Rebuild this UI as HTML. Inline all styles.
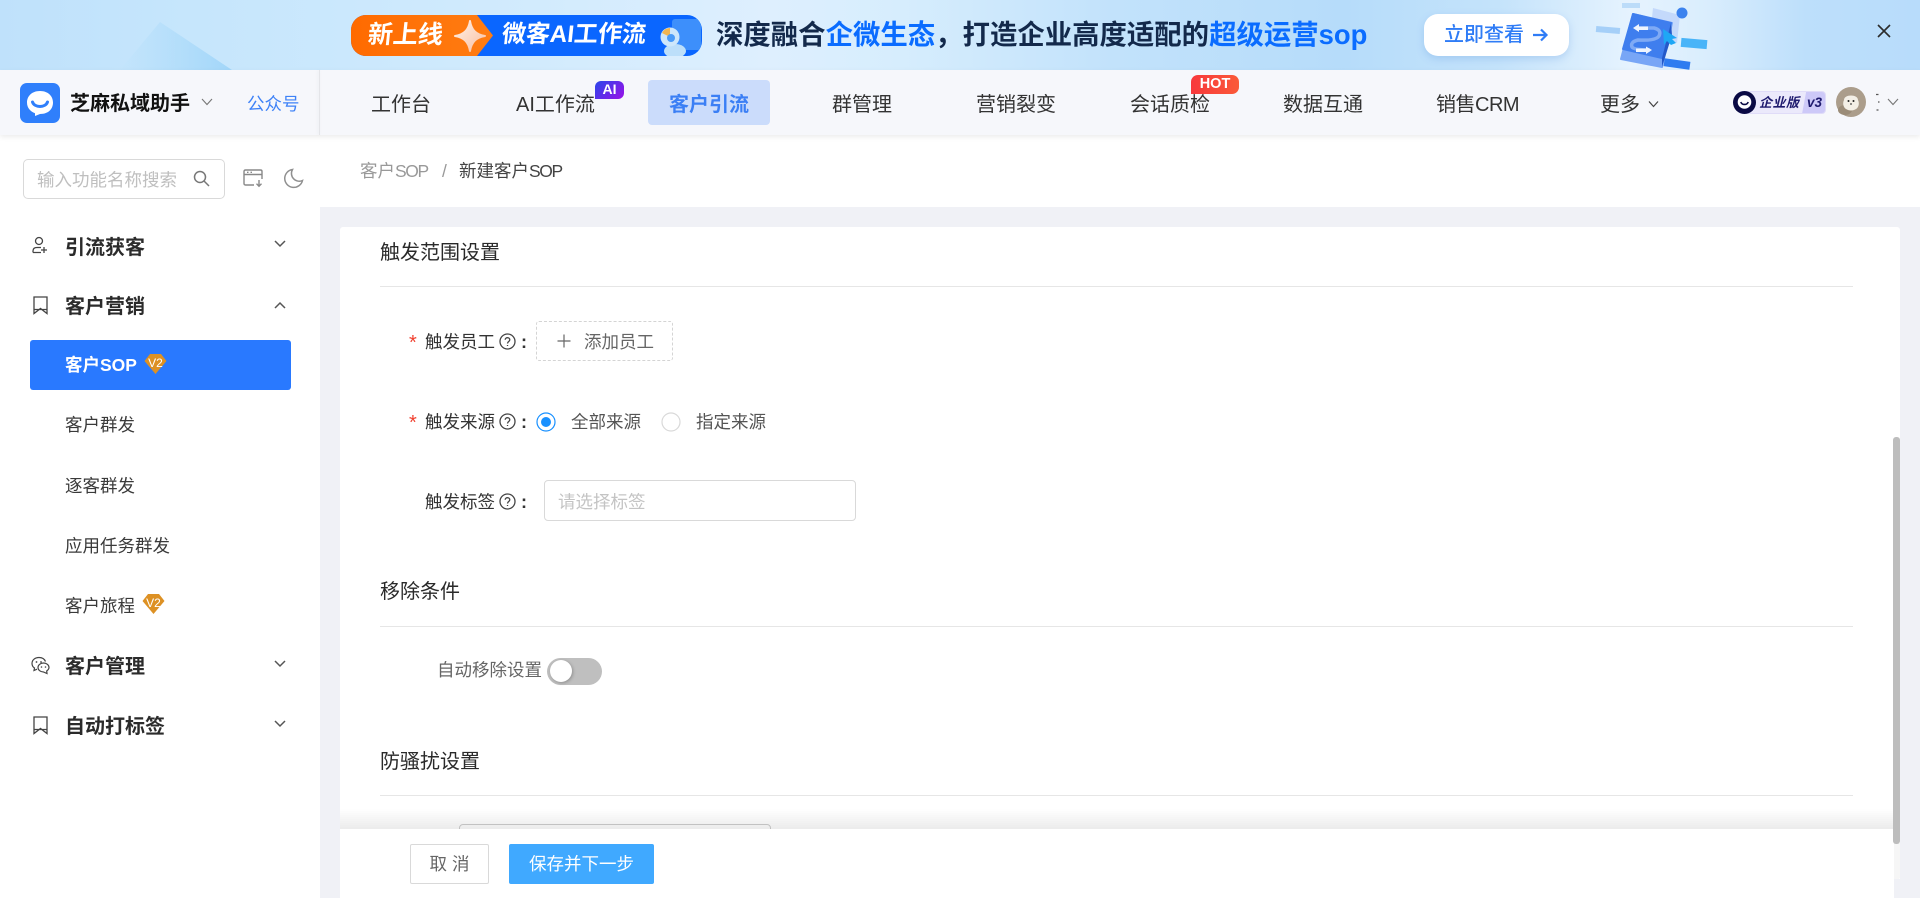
<!DOCTYPE html>
<html lang="zh"><head><meta charset="utf-8"><title>新建客户SOP</title>
<style>
*{box-sizing:border-box;margin:0;padding:0}
html,body{width:1920px;height:898px;overflow:hidden;background:#fff}
body{font-family:"Liberation Sans","Noto Sans CJK SC",sans-serif;position:relative;color:#333}
.a{position:absolute}
.t{position:absolute;white-space:nowrap;line-height:24px;height:24px}
.nav{font-size:20px;color:#333;top:93px}
.m{font-size:20px;font-weight:700;color:#2b2b2b;left:65px}
.s{font-size:17.5px;color:#3a3a3a;left:65px}
.h{font-size:20px;color:#2a2a2a;left:380px}
.l{font-size:17.5px;color:#333}
.c{font-size:18px;font-weight:700;color:#333}
.hr{position:absolute;left:380px;width:1473px;height:1px;background:#e6e6e6}
.star{color:#f0402f;font-size:20px}
.n{letter-spacing:-1.4px}
svg{position:absolute;display:block}
</style></head><body>

<!-- banner -->
<div class="a" style="left:0;top:0;width:1920px;height:70px;overflow:hidden;background:linear-gradient(90deg,#bfe1fb 0,#c6e6fc 10%,#cbe8fd 18%,#d2ebfd 28%,#deeffe 40%,#d6edfd 47%,#c2e2fb 58%,#b6dcfa 70%,#c4e3fb 78%,#e6f3fe 85%,#d9edfd 89%,#bddffb 94%,#b8dcfb 100%)">
  <svg style="left:0;top:0" width="320" height="70" viewBox="0 0 320 70"><defs><linearGradient id="d" x1="0" y1="0" x2="1" y2="0"><stop offset="0" stop-color="#a6d8f9" stop-opacity="0"/><stop offset="1" stop-color="#a2d6f9"/></linearGradient></defs><polygon points="160,22 232,70 120,70" fill="url(#d)"/></svg>
  <div class="a" style="left:351px;top:15px;width:351px;height:41px;border-radius:15px;overflow:hidden;background:#0a66ff">
    <div class="a" style="left:0;top:0;width:142px;height:41px;background:linear-gradient(90deg,#ff6a00,#ff7d12);clip-path:polygon(0 0,126px 0,142px 20.5px,126px 41px,0 41px)"></div>
    <span class="t" style="left:17px;top:8px;font-size:25px;font-weight:700;color:#fff;transform:skewX(-6deg)">新上线</span>
    <svg style="left:103px;top:5px" width="32" height="32" viewBox="0 0 32 32"><defs><linearGradient id="p" x1="0" y1="0" x2="1" y2="1"><stop offset="0" stop-color="#fff1e8"/><stop offset="1" stop-color="#f9bfa0"/></linearGradient></defs><path d="M16 1C17.500 10 22 14.500 31 16C22 17.500 17.500 22 16 31C14.500 22 10 17.500 1 16C10 14.500 14.500 10 16 1Z" fill="url(#p)" stroke="url(#p)" stroke-width="2" stroke-linejoin="round"/></svg>
    <span class="t" style="left:151px;top:8px;font-size:24px;font-weight:700;color:#fff;transform:skewX(-6deg)">微客AI工作流</span>
    <svg style="left:306px;top:0" width="45" height="41" viewBox="0 0 45 41"><rect x="15" y="4" width="29" height="31" rx="3" fill="#3d8ffb"/><ellipse cx="18" cy="36" rx="11" ry="7" fill="#bcdffa"/><circle cx="13" cy="22" r="9.500" fill="#cde7fb"/><path d="M13 22L5 18A9 9 0 0 1 13 13Z" fill="#f1b550"/><circle cx="14" cy="23" r="4" fill="#4a9bf8"/></svg>
  </div>
  <span class="t" style="left:716px;top:19px;font-size:27.4px;font-weight:700;color:#13294b;line-height:32px;height:32px">深度融合<span style="color:#0a6cff">企微生态</span>，打造企业高度适配的<span style="color:#0a6cff">超级运营sop</span></span>
  <div class="a" style="left:1424px;top:14px;width:145px;height:42px;border-radius:14px;background:#fff;box-shadow:0 3px 8px rgba(80,140,220,.25)">
    <span class="t" style="left:20px;top:9px;font-size:20px;font-weight:500;color:#2f7cf6">立即查看</span>
    <svg style="left:107px;top:13px" width="18" height="16" viewBox="0 0 18 16"><path d="M2 8H15M10 2.500L15.500 8L10 13.500" fill="none" stroke="#2f7cf6" stroke-width="2.200"/></svg>
  </div>
  <svg style="left:1570px;top:0" width="170" height="70" viewBox="0 0 170 70">
    <rect x="52" y="3" width="18" height="5" fill="#bcdcf9"/>
    <rect x="26" y="27" width="24" height="6" fill="#a5cff8" transform="rotate(5 38 30)"/>
    <polygon points="83,8 110,15 107,43 80,37" fill="#c4d9fb"/>
    <circle cx="112" cy="13" r="5.500" fill="#3b82ee"/>
    <path d="M63 14L102 23L92 67L51 59Z" fill="#78a6f6" stroke="#78a6f6" stroke-width="2" stroke-linejoin="round"/>
    <path d="M63 14L101 23L92 58L53 49Z" fill="#3f7eee" stroke="#3f7eee" stroke-width="2" stroke-linejoin="round"/>
    <path d="M101 23L102 35L92 67L92 58Z" fill="#2459c9"/>
    <path d="M66 28H84Q92 30 89 36Q86 41 68 40Q60 42 62 47Q64 50 80 50" fill="none" stroke="#7faaf5" stroke-width="3.500"/>
    <path d="M63 28L69 24V26.500H78V30H69V32ZM82 50L76 46.500V48.500H66V52H76V54Z" fill="#eef4fe"/>
    <polygon points="93,29 107,38 102,39 106,43 101,45 97,41 94,45" fill="#1ea7f5"/>
    <rect x="111" y="39" width="26" height="9" fill="#49b4f8" transform="rotate(5 124 44)"/>
    <rect x="94" y="60" width="26" height="8" fill="#2f7cf0" transform="rotate(8 107 64)"/>
  </svg>
  <svg style="left:1876px;top:23px" width="16" height="16" viewBox="0 0 16 16"><path d="M2 2L14 14M14 2L2 14" stroke="#2c2c2c" stroke-width="1.600" fill="none"/></svg>
</div>

<!-- nav -->
<div class="a" style="left:0;top:70px;width:1920px;height:65px;background:#f6f7fb;box-shadow:0 2px 5px rgba(0,0,0,.08);z-index:3">
  <div class="a" style="left:319px;top:0;width:1px;height:65px;background:#e4e5e9;box-shadow:-1px 0 3px rgba(0,0,0,.08)"></div>
</div>
<div class="a" style="left:0;top:0;width:1920px;height:135px;z-index:4">
  <svg style="left:20px;top:83px" width="40" height="40" viewBox="0 0 40 40"><rect width="40" height="40" rx="7" fill="#2f7ffb"/><path d="M20 8C11.500 8 7 13.500 7 19.500C7 25 10.500 28.500 15 30.200V33L20 31C29 31 33 25.500 33 19.500C33 13.500 28.500 8 20 8Z" fill="#fff"/><path d="M12.500 19C14.500 25 25.500 25 27.500 19" fill="none" stroke="#2f7ffb" stroke-width="3" stroke-linecap="round"/></svg>
  <span class="t" style="left:70px;top:92px;font-size:20px;font-weight:700;color:#111">芝麻私域助手</span>
  <svg style="left:201px;top:98px" width="12" height="8" viewBox="0 0 12 8"><path d="M1 1L6 6.500L11 1" fill="none" stroke="#777" stroke-width="1.100"/></svg>
  <span class="t" style="left:247px;top:92px;font-size:17.5px;color:#3e82f7">公众号</span>

  <span class="t nav" style="left:371px">工作台</span>
  <span class="t nav" style="left:516px">AI工作流</span>
  <div class="a" style="left:595px;top:81px;width:29px;height:18px;border-radius:6px 6px 6px 0;background:linear-gradient(135deg,#2a46ea,#9a10e8);color:#fff;font-size:14px;font-weight:700;line-height:17px;text-align:center">AI</div>
  <div class="a" style="left:648px;top:80px;width:122px;height:45px;border-radius:4px;background:#cbdcfb"></div>
  <span class="t nav" style="left:669px;font-weight:700;color:#3b7ff5">客户引流</span>
  <span class="t nav" style="left:832px">群管理</span>
  <span class="t nav" style="left:976px">营销裂变</span>
  <span class="t nav" style="left:1130px">会话质检</span>
  <div class="a" style="left:1191px;top:75px;width:48px;height:19px;border-radius:7px 7px 7px 0;background:linear-gradient(90deg,#f8383c,#fa5a38);color:#fff;font-size:14.500px;font-weight:700;line-height:18px;text-align:center">HOT</div>
  <span class="t nav" style="left:1283px">数据互通</span>
  <span class="t nav" style="left:1436px;letter-spacing:-.5px">销售CRM</span>
  <span class="t nav" style="left:1600px">更多</span>
  <svg style="left:1648px;top:100px" width="11" height="8" viewBox="0 0 11 8"><path d="M1 1.500L5.500 6.500L10 1.500" fill="none" stroke="#444" stroke-width="1.200"/></svg>

  <div class="a" style="left:1738px;top:91px;width:88px;height:23px;border-radius:4px;background:#ebe9fb;border:1px solid #e0dcf8;overflow:hidden">
    <div class="a" style="right:0;top:0;width:23px;height:22px;background:#cdc9f8;clip-path:polygon(18% 0,100% 0,100% 100%,0 100%)"></div>
    <span class="t" style="left:20px;top:-1px;font-size:13px;font-weight:700;font-style:italic;color:#1e1a6e;letter-spacing:.5px">企业版</span>
    <span class="t" style="left:68px;top:-1px;font-size:13.500px;font-weight:700;font-style:italic;color:#1e1a6e">v3</span>
  </div>
  <svg style="left:1733px;top:91px" width="23" height="23" viewBox="0 0 23 23"><circle cx="11.500" cy="11.500" r="11.500" fill="#0a0a44"/><circle cx="11.500" cy="11" r="6.800" fill="#fff"/><path d="M7.800 11C9 14.300 14 14.300 15.200 11" stroke="#0a0a44" stroke-width="1.600" fill="none"/></svg>
  <svg style="left:1836px;top:87px" width="30" height="30" viewBox="0 0 30 30"><circle cx="15" cy="15" r="15" fill="#ab9d8b"/><ellipse cx="9" cy="23" rx="7" ry="5" fill="#9b8c78"/><path d="M8 13C8 7 22 7 22 13C24 17 22 21 20 22C17 24 13 24 10 22C8 21 6 17 8 13Z" fill="#f3efe6"/><circle cx="12.500" cy="14" r="1" fill="#222"/><circle cx="17.500" cy="14" r="1" fill="#222"/><circle cx="15" cy="17" r=".9" fill="#444"/></svg>
  <svg style="left:1875px;top:93px" width="6" height="20" viewBox="0 0 6 20"><path d="M1 1.500H3.500M3 9H4.500M1.500 17H3.500" stroke="#555" stroke-width="1.300"/></svg>
  <svg style="left:1887px;top:98px" width="12" height="8" viewBox="0 0 12 8"><path d="M1 1L6 6.500L11 1" fill="none" stroke="#777" stroke-width="1.100"/></svg>
</div>

<!-- sidebar -->
<div class="a" style="left:0;top:135px;width:320px;height:763px;background:#fff">
  <div class="a" style="left:23px;top:24px;width:202px;height:40px;border:1px solid #d9d9d9;border-radius:5px"></div>
  <span class="t" style="left:37px;top:33px;font-size:17.5px;color:#bfbfbf">输入功能名称搜索</span>
  <svg style="left:193px;top:35px" width="17" height="17" viewBox="0 0 17 17"><circle cx="7" cy="7" r="5.500" fill="none" stroke="#777" stroke-width="1.500"/><path d="M11 11L16 16" stroke="#777" stroke-width="1.500"/></svg>
  <svg style="left:243px;top:34px" width="21" height="20" viewBox="0 0 21 20"><path d="M11 16H2.500Q1 16 1 14.500V2.500Q1 1 2.500 1H17.500Q19 1 19 2.500V10M1 5.500H19M4 3.300H5.500M7.500 3.300H9" fill="none" stroke="#888" stroke-width="1.400"/><path d="M16 11V17M13.500 14.700L16 17.300L18.500 14.700" fill="none" stroke="#888" stroke-width="1.400"/></svg>
  <svg style="left:283px;top:33px" width="21" height="21" viewBox="0 0 21 21"><path d="M9.500 1.500A9 9 0 1 0 19.500 12.500A7.800 7.800 0 0 1 9.500 1.500Z" fill="none" stroke="#909090" stroke-width="1.500"/></svg>
</div>
<svg style="left:32px;top:236px" width="17" height="20" viewBox="0 0 17 20"><circle cx="7" cy="5" r="3.500" fill="none" stroke="#444" stroke-width="1.300"/><path d="M1 16.500V15Q1 11.500 5 11.500H9M1 16.500H9M12 11V17M9 14H15" fill="none" stroke="#444" stroke-width="1.300"/></svg>
<span class="t m" style="top:236px">引流获客</span>
<svg style="left:274px;top:240px" width="12" height="8" viewBox="0 0 12 8"><path d="M1 1L6 6L11 1" fill="none" stroke="#555" stroke-width="1.500"/></svg>

<svg style="left:33px;top:296px" width="15" height="19" viewBox="0 0 15 19"><path d="M1 1H14V17.500L7.500 12.500L1 17.500ZM1 13.500H14" fill="none" stroke="#444" stroke-width="1.300"/></svg>
<span class="t m" style="top:295px">客户营销</span>
<svg style="left:274px;top:301px" width="12" height="8" viewBox="0 0 12 8"><path d="M1 7L6 2L11 7" fill="none" stroke="#555" stroke-width="1.500"/></svg>

<div class="a" style="left:30px;top:340px;width:261px;height:50px;border-radius:3px;background:#2979ff"></div>
<span class="t" style="left:65px;top:353px;font-size:17.5px;font-weight:700;color:#fff">客户SOP</span>
<svg style="left:144px;top:353px" width="23" height="22" viewBox="0 0 23 22"><path d="M6 1H17L22.500 8L11.500 21L0.500 8Z" fill="#dd9124"/><text x="11.500" y="14" font-size="12" fill="#fff" text-anchor="middle" font-family="Liberation Sans">V2</text></svg>

<span class="t s" style="top:413px">客户群发</span>
<span class="t s" style="top:474px">逐客群发</span>
<span class="t s" style="top:534px">应用任务群发</span>
<span class="t s" style="top:594px">客户旅程</span>
<svg style="left:142px;top:593px" width="23" height="22" viewBox="0 0 23 22"><path d="M6 1H17L22.500 8L11.500 21L0.500 8Z" fill="#dd9124"/><text x="11.500" y="14" font-size="12" fill="#fff" text-anchor="middle" font-family="Liberation Sans">V2</text></svg>

<svg style="left:31px;top:656px" width="19" height="19" viewBox="0 0 19 19"><path d="M8 1.500C4 1.500 1 4 1 7.500C1 9.500 2 11 3.500 12L3 14.500L6 13.200" fill="none" stroke="#444" stroke-width="1.200"/><path d="M8 1.500C11 1.500 13.500 3 14.500 5.500" fill="none" stroke="#444" stroke-width="1.200"/><path d="M12.500 7C9.500 7 7 9 7 11.500C7 14 9.500 16 12.500 16L16 17.500L15.700 15C17 14 18 13 18 11.500C18 9 15.500 7 12.500 7Z" fill="none" stroke="#444" stroke-width="1.200"/><circle cx="5.500" cy="6" r=".9" fill="#444"/><circle cx="10" cy="6" r=".9" fill="#444"/><circle cx="10.500" cy="11" r=".8" fill="#444"/><circle cx="14.500" cy="11" r=".8" fill="#444"/></svg>
<span class="t m" style="top:655px">客户管理</span>
<svg style="left:274px;top:660px" width="12" height="8" viewBox="0 0 12 8"><path d="M1 1L6 6L11 1" fill="none" stroke="#555" stroke-width="1.500"/></svg>

<svg style="left:33px;top:716px" width="15" height="19" viewBox="0 0 15 19"><path d="M1 1H14V17.500L7.500 12.500L1 17.500ZM1 13.500H14" fill="none" stroke="#444" stroke-width="1.300"/></svg>
<span class="t m" style="top:715px">自动打标签</span>
<svg style="left:274px;top:720px" width="12" height="8" viewBox="0 0 12 8"><path d="M1 1L6 6L11 1" fill="none" stroke="#555" stroke-width="1.500"/></svg>

<!-- main -->
<div class="a" style="left:320px;top:135px;width:1600px;height:763px;background:#f0f1f6"></div>
<div class="a" style="left:320px;top:135px;width:1600px;height:72px;background:#fff"></div>
<span class="t" style="left:360px;top:159px;font-size:17.5px;color:#999">客户<span class="n">SOP</span></span>
<span class="t" style="left:442px;top:159px;font-size:17.5px;color:#999">/</span>
<span class="t" style="left:459px;top:159px;font-size:17.5px;color:#444">新建客户<span class="n">SOP</span></span>

<div class="a" style="left:340px;top:227px;width:1560px;height:652px;background:#fff;border-radius:3px 3px 0 0"></div>
<span class="t h" style="top:241px">触发范围设置</span>
<div class="hr" style="top:286px"></div>

<span class="t star" style="left:409px;top:331px">*</span>
<span class="t l" style="left:425px;top:330px">触发员工</span>
<svg style="left:499px;top:333px" width="17" height="17" viewBox="0 0 17 17"><circle cx="8.500" cy="8.500" r="7.500" fill="none" stroke="#444" stroke-width="1.300"/><path d="M6.200 6.800C6.200 4 10.800 4 10.800 6.800C10.800 8.600 8.500 8.500 8.500 10.500M8.500 12V13" fill="none" stroke="#444" stroke-width="1.300"/></svg>
<span class="t c" style="left:521px;top:330px">:</span>
<div class="a" style="left:536px;top:321px;width:137px;height:40px;border:1px dashed #d4d4d4;border-radius:3px"></div>
<svg style="left:557px;top:334px" width="14" height="14" viewBox="0 0 14 14"><path d="M7 0.500V13.500M0.500 7H13.500" stroke="#666" stroke-width="1.200"/></svg>
<span class="t l" style="left:584px;top:330px;color:#666">添加员工</span>

<span class="t star" style="left:409px;top:411px">*</span>
<span class="t l" style="left:425px;top:410px">触发来源</span>
<svg style="left:499px;top:413px" width="17" height="17" viewBox="0 0 17 17"><circle cx="8.500" cy="8.500" r="7.500" fill="none" stroke="#444" stroke-width="1.300"/><path d="M6.200 6.800C6.200 4 10.800 4 10.800 6.800C10.800 8.600 8.500 8.500 8.500 10.500M8.500 12V13" fill="none" stroke="#444" stroke-width="1.300"/></svg>
<span class="t c" style="left:521px;top:410px">:</span>
<svg style="left:536px;top:412px" width="20" height="20" viewBox="0 0 20 20"><circle cx="10" cy="10" r="9" fill="#fff" stroke="#1890ff" stroke-width="1.200"/><circle cx="10" cy="10" r="5" fill="#1890ff"/></svg>
<span class="t l" style="left:571px;top:410px;color:#555">全部来源</span>
<svg style="left:661px;top:412px" width="20" height="20" viewBox="0 0 20 20"><circle cx="10" cy="10" r="9" fill="#fff" stroke="#d9d9d9" stroke-width="1.200"/></svg>
<span class="t l" style="left:696px;top:410px;color:#555">指定来源</span>

<span class="t l" style="left:425px;top:490px">触发标签</span>
<svg style="left:499px;top:493px" width="17" height="17" viewBox="0 0 17 17"><circle cx="8.500" cy="8.500" r="7.500" fill="none" stroke="#444" stroke-width="1.300"/><path d="M6.200 6.800C6.200 4 10.800 4 10.800 6.800C10.800 8.600 8.500 8.500 8.500 10.500M8.500 12V13" fill="none" stroke="#444" stroke-width="1.300"/></svg>
<span class="t c" style="left:521px;top:490px">:</span>
<div class="a" style="left:544px;top:480px;width:312px;height:41px;border:1px solid #d9d9d9;border-radius:4px"></div>
<span class="t l" style="left:558px;top:490px;color:#c4c4c4">请选择标签</span>

<span class="t h" style="top:580px">移除条件</span>
<div class="hr" style="top:626px"></div>
<span class="t l" style="left:437px;top:658px;color:#666">自动移除设置</span>
<div class="a" style="left:547px;top:658px;width:55px;height:27px;border-radius:14px;background:#bfbfbf"></div>
<div class="a" style="left:550px;top:660px;width:22px;height:22px;border-radius:50%;background:#fff;box-shadow:1px 1px 3px rgba(0,0,0,.25)"></div>

<span class="t h" style="top:750px">防骚扰设置</span>
<div class="hr" style="top:795px"></div>
<div class="a" style="left:459px;top:824px;width:312px;height:40px;border:1px solid #cfcfcf;border-radius:4px"></div>

<!-- footer -->
<div class="a" style="left:340px;top:809px;width:1554px;height:20px;background:linear-gradient(180deg,rgba(0,0,0,0),rgba(0,0,0,.08))"></div>
<div class="a" style="left:340px;top:829px;width:1554px;height:69px;background:#fff"></div>
<div class="a" style="left:410px;top:844px;width:79px;height:40px;border:1px solid #d9d9d9;border-radius:2px;background:#fff;text-align:center;font-size:17.5px;line-height:38px;color:#666;letter-spacing:5px;padding-left:5px">取消</div>
<div class="a" style="left:509px;top:844px;width:145px;height:40px;border-radius:2px;background:#40a9ff;text-align:center;font-size:17.5px;line-height:40px;color:#fff">保存并下一步</div>

<!-- scrollbar -->
<div class="a" style="left:1894px;top:843px;width:6px;height:36px;background:#f6f6f6;border-radius:0 0 2px 0"></div>
<div class="a" style="left:1893px;top:437px;width:7px;height:407px;border-radius:3px;background:#bdbdbd"></div>
</body></html>
